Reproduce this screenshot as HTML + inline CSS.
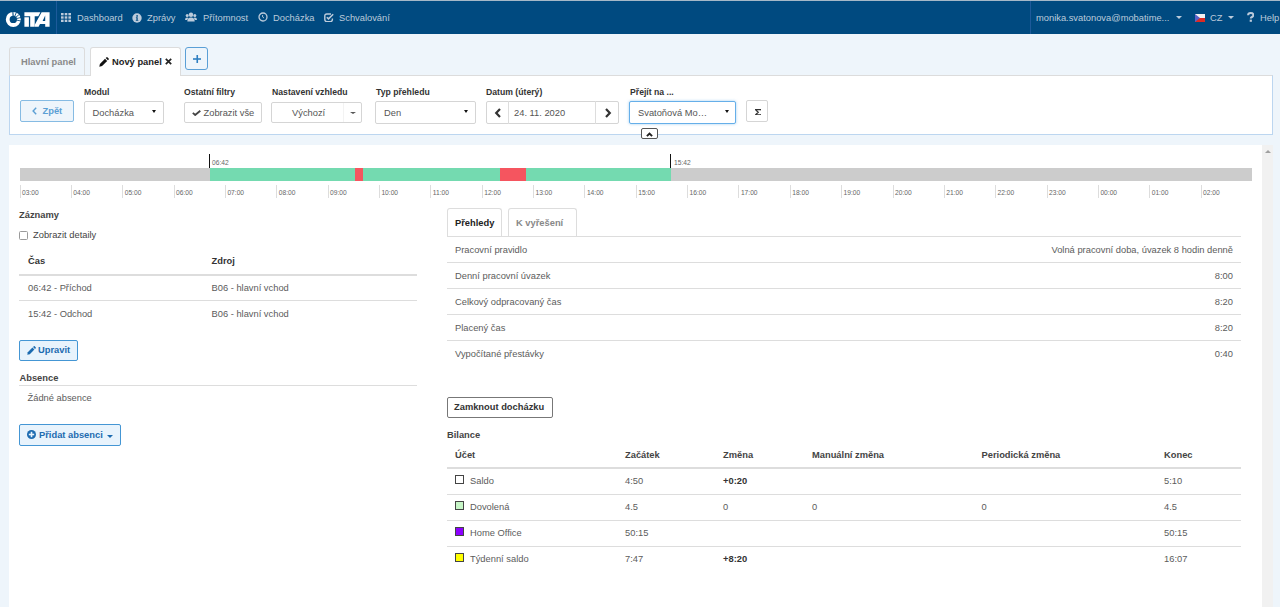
<!DOCTYPE html>
<html><head><meta charset="utf-8">
<style>
*{box-sizing:border-box;margin:0;padding:0}
html,body{width:1280px;height:607px;overflow:hidden}
body{position:relative;background:#eef5fb;font-family:"Liberation Sans",sans-serif;font-size:9.33px;color:#5c5c5c}
.a{position:absolute;white-space:nowrap}
.b{font-weight:bold}
#topline{left:0;top:0;width:1280px;height:1px;background:#a5b8c8}
#nav{left:0;top:1px;width:1280px;height:33px;background:#004a80}
.nv{color:#bccbdb;font-size:9.33px;top:13px;line-height:10px}
.sep{top:1px;height:33px;width:1px;background:#1d5a9a}
.panel{background:#fff}
.lbl{font-weight:bold;color:#333;font-size:8.67px;line-height:10px}
.sel{background:#fff;border:1px solid #d5d5d5;border-radius:2px}
.btn{border-radius:2px}
.caret{width:0;height:0;border-left:2.5px solid transparent;border-right:2.5px solid transparent;border-top:3.5px solid #111}
.tl{font-size:6.67px;color:#666;line-height:7px}
.tick{width:1px;height:13px;background:#ddd;top:185px}
.hl{height:1px;background:#ddd}
.tx{line-height:11px}
</style></head><body>
<div class="a" id="topline"></div>
<div class="a" id="nav"></div>
<!-- logo -->
<svg class="a" style="left:4px;top:10px" width="48" height="20" viewBox="0 0 48 20"><circle cx="9.3" cy="9.399999999999999" r="5.60" fill="none" stroke="#fff" stroke-width="3.80"/><line x1="9.13" y1="6.20" x2="8.88" y2="1.41" stroke="#004a80" stroke-width="1.1"/><line x1="10.60" y1="6.48" x2="12.55" y2="2.09" stroke="#004a80" stroke-width="0.9"/><line x1="11.75" y1="7.34" x2="15.43" y2="4.26" stroke="#004a80" stroke-width="0.85"/><line x1="12.40" y1="8.63" x2="17.06" y2="7.46" stroke="#004a80" stroke-width="0.85"/><line x1="12.43" y1="10.07" x2="17.13" y2="11.06" stroke="#004a80" stroke-width="0.85"/><path d="M20.40 2.20 36.40 2.20 34.30 6.30 30.70 6.30 30.70 16.70 26.20 16.70 26.20 6.30 20.40 6.30Z M20.40 7.30 24.90 7.30 24.90 16.70 20.40 16.70Z" fill="#fff"/><path fill-rule="evenodd" d="M37.60 2.20 45.60 2.20 45.60 16.70 30.80 16.70 30.80 14.80Z M41.20 5.60 41.20 10.90 38.60 10.90Z M36.00 13.90 41.20 13.90 41.20 16.70 34.60 16.70Z" fill="#fff"/></svg>
<div class="a sep" style="left:56px"></div>
<!-- nav items -->
<svg class="a" style="left:61px;top:13px" width="10" height="9" viewBox="0 0 10 10" fill="#bccbdb" preserveAspectRatio="none">
 <rect x="0" y="0" width="2.6" height="2.6"/><rect x="3.7" y="0" width="2.6" height="2.6"/><rect x="7.4" y="0" width="2.6" height="2.6"/>
 <rect x="0" y="3.7" width="2.6" height="2.6"/><rect x="3.7" y="3.7" width="2.6" height="2.6"/><rect x="7.4" y="3.7" width="2.6" height="2.6"/>
 <rect x="0" y="7.4" width="2.6" height="2.6"/><rect x="3.7" y="7.4" width="2.6" height="2.6"/><rect x="7.4" y="7.4" width="2.6" height="2.6"/>
</svg>
<div class="a nv" style="left:77px">Dashboard</div>
<svg class="a" style="left:132px;top:12.5px" width="10" height="10" viewBox="0 0 10 10"><circle cx="5" cy="5" r="4.7" fill="#bccbdb"/><circle cx="5.1" cy="2.9" r="0.85" fill="#004a80"/><path d="M3.9 4.2 H5.7 V7 H6.3 V7.8 H3.8 V7 H4.4 V4.9 H3.9 Z" fill="#004a80"/></svg>
<div class="a nv" style="left:147px">Zprávy</div>
<svg class="a" style="left:185px;top:12px" width="12" height="10" viewBox="0 0 12 10" fill="#bccbdb"><circle cx="6" cy="2.8" r="2.2"/><path d="M2.3 9.5 Q2.3 5.6 6 5.6 Q9.7 5.6 9.7 9.5 Z"/><circle cx="2.2" cy="3.6" r="1.5"/><circle cx="9.8" cy="3.6" r="1.5"/><path d="M0 8 Q0 5.6 2.2 5.6 Q3 5.6 3.4 6 Q2.4 7 2.2 8 Z"/><path d="M12 8 Q12 5.6 9.8 5.6 Q9 5.6 8.6 6 Q9.6 7 9.8 8 Z"/></svg>
<div class="a nv" style="left:203px">Přítomnost</div>
<svg class="a" style="left:257.5px;top:12px" width="10" height="10" viewBox="0 0 10 10"><circle cx="5" cy="5" r="4" fill="none" stroke="#bccbdb" stroke-width="1.3"/><path d="M4.6 3 V5 L6 6" fill="none" stroke="#bccbdb" stroke-width="0.9"/></svg>
<div class="a nv" style="left:273px">Docházka</div>
<svg class="a" style="left:323.5px;top:12.5px" width="10" height="9.5" viewBox="0 0 10 9.5"><path d="M7 1 H2.8 Q0.8 1 0.8 3 V6.6 Q0.8 8.6 2.8 8.6 H6.4 Q8.4 8.6 8.4 6.6 V5.6" fill="none" stroke="#bccbdb" stroke-width="1.4"/><path d="M2.8 4.2 L4.5 5.9 L9.2 1.2" fill="none" stroke="#bccbdb" stroke-width="1.5"/></svg>
<div class="a nv" style="left:339px">Schvalování</div>

<div class="a sep" style="left:1030px"></div>
<div class="a nv" style="left:1036px">monika.svatonova@mobatime...</div>
<div class="a caret" style="left:1176px;top:16px;border-top-color:#bccbdb;border-left-width:3px;border-right-width:3px;border-top-width:3px"></div>
<svg class="a" style="left:1195px;top:14px" width="10" height="8" viewBox="0 0 10 8"><rect width="10" height="4" fill="#f2f2f2"/><rect y="4" width="10" height="4" fill="#dd2a22"/><path d="M0 0 L5 4 L0 8 Z" fill="#5860c8"/></svg>
<div class="a nv" style="left:1210px">CZ</div>
<div class="a caret" style="left:1228px;top:16px;border-top-color:#bccbdb;border-left-width:3px;border-right-width:3px;border-top-width:3px"></div>
<svg class="a" style="left:1246.5px;top:12.3px" width="7.5" height="10" viewBox="0 0 7.5 10"><path d="M1.1 3.2 Q1.1 1 3.7 1 Q6.4 1 6.4 3.1 Q6.4 4.3 5 5 Q3.8 5.6 3.8 6.6" fill="none" stroke="#bccbdb" stroke-width="2"/><rect x="2.7" y="7.6" width="2.2" height="2.2" fill="#bccbdb"/></svg>
<div class="a nv" style="left:1260px">Help</div>

<!-- tabs -->
<div class="a" style="left:9px;top:47px;width:76px;height:29px;border:1px solid #dcdcdc;border-bottom:none;border-radius:3px 3px 0 0;background:#eef5fb"></div>
<div class="a b tx" style="left:21px;top:57px;color:#8a8a8a">Hlavní panel</div>
<div class="a" style="left:90px;top:47px;width:91px;height:29px;border:1px solid #dcdcdc;border-bottom:none;border-radius:3px 3px 0 0;background:#fff;z-index:2"></div>
<svg class="a" style="left:98.5px;top:56.5px;z-index:3" width="10" height="10" viewBox="0 0 10 10"><path d="M0.3 9.7 L0.9 6.9 L6.0 1.8 L8.2 4.0 L3.1 9.1 Z" fill="#111"/><path d="M6.7 1.1 L7.6 0.3 Q8.1 -0.1 8.6 0.4 L9.6 1.4 Q10.1 1.9 9.7 2.4 L8.9 3.3 Z" fill="#111"/></svg>
<div class="a b tx" style="left:112px;top:57px;color:#222;z-index:3">Nový panel</div>
<svg class="a" style="left:165px;top:58px;z-index:3" width="7" height="7" viewBox="0 0 7 7"><path d="M0.8 0.8 L6.2 6.2 M6.2 0.8 L0.8 6.2" stroke="#222" stroke-width="1.7"/></svg>
<div class="a" style="left:185px;top:47px;width:23px;height:23px;border:1px solid #5a9fd6;border-radius:3px;background:#eef5fb"></div>
<svg class="a" style="left:192.5px;top:55px" width="8.5" height="8" viewBox="0 0 8.5 8"><rect x="3.45" y="0" width="1.6" height="8" fill="#2f7fc1"/><rect x="0" y="3.2" width="8.5" height="1.6" fill="#2f7fc1"/></svg>

<!-- filter panel -->
<div class="a" style="left:9px;top:75px;width:1264px;height:60px;background:#fff;border:1px solid #bcd6f0;border-top-color:#dcdcdc"></div>
<div class="a" style="left:91px;top:75px;width:89px;height:2px;background:#fff;z-index:2"></div>

<div class="a btn" style="left:20px;top:100px;width:54px;height:22px;border:1px solid #86bbe3;background:#eef5fb"></div>
<svg class="a" style="left:32px;top:107px" width="5" height="8" viewBox="0 0 5 8"><path d="M4.2 0.8 L1.1 4 L4.2 7.2" fill="none" stroke="#5b9fd4" stroke-width="1.4"/></svg>
<div class="a b tx" style="left:42.5px;top:106px;color:#5b9fd4">Zpět</div>

<div class="a lbl" style="left:84px;top:87px">Modul</div>
<div class="a sel" style="left:84px;top:101px;width:80px;height:23px"></div>
<div class="a tx" style="left:92.5px;top:108px;color:#555">Docházka</div>
<div class="a caret" style="left:152px;top:110px"></div>

<div class="a lbl" style="left:184px;top:87px">Ostatní filtry</div>
<div class="a sel" style="left:184px;top:102px;width:78px;height:21px"></div>
<svg class="a" style="left:191.5px;top:109.5px" width="9" height="6" viewBox="0 0 9 6"><path d="M0.8 2.8 L3.2 5 L8.3 0.7" fill="none" stroke="#444" stroke-width="1.8"/></svg>
<div class="a tx" style="left:203.5px;top:108px;color:#555">Zobrazit vše</div>

<div class="a lbl" style="left:272px;top:87px">Nastavení vzhledu</div>
<div class="a sel" style="left:271px;top:102px;width:91px;height:21px"></div>
<div class="a" style="left:343px;top:103px;width:1px;height:19px;background:#f3f3f3"></div>
<div class="a tx" style="left:292px;top:108px;color:#555">Výchozí</div>
<div class="a caret" style="left:349.5px;top:112px;border-top-color:#555;border-left-width:3px;border-right-width:3px;border-top-width:2.5px"></div>

<div class="a lbl" style="left:376px;top:87px">Typ přehledu</div>
<div class="a sel" style="left:375px;top:101px;width:101px;height:23px"></div>
<div class="a tx" style="left:384px;top:108px;color:#555">Den</div>
<div class="a caret" style="left:464px;top:110px"></div>

<div class="a lbl" style="left:486px;top:87px">Datum (úterý)</div>
<div class="a sel" style="left:486px;top:101px;width:133px;height:23px"></div>
<div class="a" style="left:508px;top:101px;width:1px;height:23px;background:#ddd"></div>
<div class="a" style="left:595px;top:101px;width:1px;height:23px;background:#ddd"></div>
<svg class="a" style="left:494px;top:108px" width="8" height="10" viewBox="0 0 8 10"><path d="M6 1 L2.2 5 L6 9" fill="none" stroke="#333" stroke-width="2.2"/></svg>
<div class="a tx" style="left:514px;top:108px;color:#555">24. 11. 2020</div>
<svg class="a" style="left:603.5px;top:108px" width="8" height="10" viewBox="0 0 8 10"><path d="M2 1 L5.8 5 L2 9" fill="none" stroke="#333" stroke-width="2.2"/></svg>

<div class="a lbl" style="left:630px;top:87px">Přejít na ...</div>
<div class="a" style="left:629px;top:101px;width:107px;height:23px;border:1px solid #66afe9;border-radius:2px;box-shadow:0 0 3px rgba(102,175,233,.6);background:#fff"></div>
<div class="a tx" style="left:638px;top:108px;color:#555">Svatoňová Mo…</div>
<div class="a caret" style="left:725px;top:110px"></div>

<div class="a sel" style="left:746px;top:100px;width:22px;height:22px"></div>
<svg class="a" style="left:754.5px;top:108.5px" width="6.5" height="6.5" viewBox="0 0 6.5 6.5"><path d="M6.2 1.6 V0.6 H0.5 L3.2 3.25 L0.5 5.9 H6.2 V4.9" fill="none" stroke="#333" stroke-width="1.3"/></svg>

<div class="a" style="left:641px;top:128px;width:17px;height:11px;border:1px solid #555;border-radius:2px;background:#fff;z-index:3"></div>
<svg class="a" style="left:646px;top:131.5px;z-index:4" width="7" height="5" viewBox="0 0 7 5"><path d="M0.9 4.2 L3.5 1.5 L6.1 4.2" fill="none" stroke="#222" stroke-width="1.9"/></svg>

<!-- main panel -->
<div class="a panel" style="left:9px;top:145px;width:1253px;height:470px"></div>
<div class="a" style="left:1262px;top:145px;width:11px;height:470px;background:#f1f1f1"></div>
<div class="a" style="left:1265px;top:149.5px;width:0;height:0;border-left:3px solid transparent;border-right:3px solid transparent;border-bottom:3.5px solid #a0a0a0"></div>

<div class="a" style="left:19.5px;top:168px;width:1232.5px;height:13px;background:#cccccc"></div>
<div class="a" style="left:209.5px;top:168px;width:461.5px;height:13px;background:#74dab0"></div>
<div class="a" style="left:355px;top:168px;width:8px;height:13px;background:#f5555f"></div>
<div class="a" style="left:500px;top:168px;width:26px;height:13px;background:#f5555f"></div>
<div class="a" style="left:209px;top:154px;width:1.2px;height:14px;background:#111"></div>
<div class="a tl" style="left:212px;top:159px">06:42</div>
<div class="a" style="left:670px;top:154px;width:1.2px;height:14px;background:#111"></div>
<div class="a tl" style="left:674px;top:159px">15:42</div>
<div class="a tick" style="left:19.5px"></div>
<div class="a tl" style="left:22.0px;top:189px">03:00</div>
<div class="a tick" style="left:70.8px"></div>
<div class="a tl" style="left:73.3px;top:189px">04:00</div>
<div class="a tick" style="left:122.2px"></div>
<div class="a tl" style="left:124.7px;top:189px">05:00</div>
<div class="a tick" style="left:173.6px"></div>
<div class="a tl" style="left:176.1px;top:189px">06:00</div>
<div class="a tick" style="left:224.9px"></div>
<div class="a tl" style="left:227.4px;top:189px">07:00</div>
<div class="a tick" style="left:276.2px"></div>
<div class="a tl" style="left:278.8px;top:189px">08:00</div>
<div class="a tick" style="left:327.6px"></div>
<div class="a tl" style="left:330.1px;top:189px">09:00</div>
<div class="a tick" style="left:378.9px"></div>
<div class="a tl" style="left:381.4px;top:189px">10:00</div>
<div class="a tick" style="left:430.3px"></div>
<div class="a tl" style="left:432.8px;top:189px">11:00</div>
<div class="a tick" style="left:481.7px"></div>
<div class="a tl" style="left:484.2px;top:189px">12:00</div>
<div class="a tick" style="left:533.0px"></div>
<div class="a tl" style="left:535.5px;top:189px">13:00</div>
<div class="a tick" style="left:584.4px"></div>
<div class="a tl" style="left:586.9px;top:189px">14:00</div>
<div class="a tick" style="left:635.7px"></div>
<div class="a tl" style="left:638.2px;top:189px">15:00</div>
<div class="a tick" style="left:687.1px"></div>
<div class="a tl" style="left:689.6px;top:189px">16:00</div>
<div class="a tick" style="left:738.4px"></div>
<div class="a tl" style="left:740.9px;top:189px">17:00</div>
<div class="a tick" style="left:789.8px"></div>
<div class="a tl" style="left:792.2px;top:189px">18:00</div>
<div class="a tick" style="left:841.1px"></div>
<div class="a tl" style="left:843.6px;top:189px">19:00</div>
<div class="a tick" style="left:892.5px"></div>
<div class="a tl" style="left:895.0px;top:189px">20:00</div>
<div class="a tick" style="left:943.8px"></div>
<div class="a tl" style="left:946.3px;top:189px">21:00</div>
<div class="a tick" style="left:995.1px"></div>
<div class="a tl" style="left:997.6px;top:189px">22:00</div>
<div class="a tick" style="left:1046.5px"></div>
<div class="a tl" style="left:1049.0px;top:189px">23:00</div>
<div class="a tick" style="left:1097.9px"></div>
<div class="a tl" style="left:1100.4px;top:189px">00:00</div>
<div class="a tick" style="left:1149.2px"></div>
<div class="a tl" style="left:1151.7px;top:189px">01:00</div>
<div class="a tick" style="left:1200.5px"></div>
<div class="a tl" style="left:1203.0px;top:189px">02:00</div>


<!-- left section -->
<div class="a b tx" style="left:19px;top:210px;color:#444">Záznamy</div>
<div class="a" style="left:19px;top:231px;width:9px;height:9px;border:1px solid #9a9a9a;border-radius:1.5px;background:#fff"></div>
<div class="a tx" style="left:33px;top:230px;color:#444">Zobrazit detaily</div>
<div class="a b tx" style="left:28px;top:256px;color:#333">Čas</div>
<div class="a b tx" style="left:211.5px;top:256px;color:#333">Zdroj</div>
<div class="a hl" style="left:19px;top:274px;width:398px;height:1.5px;background:#ddd"></div>
<div class="a tx" style="left:28px;top:283px">06:42 - Příchod</div>
<div class="a tx" style="left:211.5px;top:283px">B06 - hlavní vchod</div>
<div class="a hl" style="left:19px;top:300px;width:398px"></div>
<div class="a tx" style="left:28px;top:309px">15:42 - Odchod</div>
<div class="a tx" style="left:211.5px;top:309px">B06 - hlavní vchod</div>

<div class="a btn" style="left:19px;top:340px;width:59px;height:21px;border:1px solid #4496d4;background:#e8f3fc"></div>
<svg class="a" style="left:26.5px;top:346px" width="9" height="9" viewBox="0 0 10 10"><path d="M0.3 9.7 L0.9 6.9 L6.0 1.8 L8.2 4.0 L3.1 9.1 Z" fill="#1c6bb0"/><path d="M6.7 1.1 L7.6 0.3 Q8.1 -0.1 8.6 0.4 L9.6 1.4 Q10.1 1.9 9.7 2.4 L8.9 3.3 Z" fill="#1c6bb0"/></svg>
<div class="a b tx" style="left:38px;top:345px;color:#1c6bb0">Upravit</div>

<div class="a b tx" style="left:19.5px;top:373px;color:#444">Absence</div>
<div class="a hl" style="left:19px;top:385px;width:398px"></div>
<div class="a tx" style="left:27.5px;top:393px">Žádné absence</div>

<div class="a btn" style="left:19px;top:424px;width:102px;height:22px;border:1px solid #4496d4;background:#e8f3fc"></div>
<svg class="a" style="left:27px;top:430px" width="9" height="9" viewBox="0 0 10 10"><circle cx="5" cy="5" r="5" fill="#1c6bb0"/><rect x="4.1" y="2" width="1.8" height="6" fill="#e8f3fc"/><rect x="2" y="4.1" width="6" height="1.8" fill="#e8f3fc"/></svg>
<div class="a b tx" style="left:39px;top:430px;color:#1c6bb0">Přidat absenci</div>
<div class="a caret" style="left:107px;top:435px;border-top-color:#1c6bb0;border-left-width:3px;border-right-width:3px;border-top-width:3px"></div>

<!-- right section -->
<div class="a" style="left:447px;top:208px;width:55px;height:28px;border:1px solid #ddd;border-bottom:none;border-radius:3px 3px 0 0;background:#fff"></div>
<div class="a b tx" style="left:455px;top:218px;color:#222;z-index:3">Přehledy</div>
<div class="a" style="left:507.5px;top:208px;width:69px;height:28px;border:1px solid #ddd;border-bottom:none;border-radius:3px 3px 0 0;background:#fff"></div>
<div class="a b tx" style="left:516px;top:218px;color:#888">K vyřešení</div>
<div class="a hl" style="left:447px;top:235.5px;width:794px;height:1.5px"></div>
<div class="a tx" style="left:455px;top:245px">Pracovní pravidlo</div>
<div class="a tx" style="right:47px;top:245px">Volná pracovní doba, úvazek 8 hodin denně</div>
<div class="a hl" style="left:447px;top:262px;width:794px"></div>
<div class="a tx" style="left:455px;top:271px">Denní pracovní úvazek</div>
<div class="a tx" style="right:47px;top:271px">8:00</div>
<div class="a hl" style="left:447px;top:288px;width:794px"></div>
<div class="a tx" style="left:455px;top:297px">Celkový odpracovaný čas</div>
<div class="a tx" style="right:47px;top:297px">8:20</div>
<div class="a hl" style="left:447px;top:314px;width:794px"></div>
<div class="a tx" style="left:455px;top:323px">Placený čas</div>
<div class="a tx" style="right:47px;top:323px">8:20</div>
<div class="a hl" style="left:447px;top:340px;width:794px"></div>
<div class="a tx" style="left:455px;top:349px">Vypočítané přestávky</div>
<div class="a tx" style="right:47px;top:349px">0:40</div>

<div class="a btn" style="left:447px;top:397px;width:106px;height:21px;border:1px solid #777;background:#fff"></div>
<div class="a b tx" style="left:454px;top:402px;color:#333">Zamknout docházku</div>

<div class="a b tx" style="left:447px;top:430px;color:#444">Bilance</div>
<div class="a b tx" style="left:455px;top:450px;color:#444">Účet</div>
<div class="a b tx" style="left:625px;top:450px;color:#444">Začátek</div>
<div class="a b tx" style="left:723px;top:450px;color:#444">Změna</div>
<div class="a b tx" style="left:812px;top:450px;color:#444">Manuální změna</div>
<div class="a b tx" style="left:981.5px;top:450px;color:#444">Periodická změna</div>
<div class="a b tx" style="left:1164px;top:450px;color:#444">Konec</div>
<div class="a hl" style="left:447px;top:467px;width:794px;height:1.5px"></div>

<div class="a" style="left:455px;top:475px;width:9px;height:9px;border:1px solid #444;background:#fff"></div>
<div class="a tx" style="left:470px;top:476px">Saldo</div>
<div class="a tx" style="left:625px;top:476px">4:50</div>
<div class="a b tx" style="left:723px;top:476px;color:#333">+0:20</div>
<div class="a tx" style="left:1164px;top:476px">5:10</div>
<div class="a hl" style="left:447px;top:494px;width:794px"></div>

<div class="a" style="left:455px;top:501px;width:9px;height:9px;border:1px solid #444;background:#c6f5c6"></div>
<div class="a tx" style="left:470px;top:502px">Dovolená</div>
<div class="a tx" style="left:625px;top:502px">4.5</div>
<div class="a tx" style="left:723px;top:502px">0</div>
<div class="a tx" style="left:812px;top:502px">0</div>
<div class="a tx" style="left:981.5px;top:502px">0</div>
<div class="a tx" style="left:1164px;top:502px">4.5</div>
<div class="a hl" style="left:447px;top:520px;width:794px"></div>

<div class="a" style="left:455px;top:527px;width:9px;height:9px;border:1px solid #444;background:#8c00ff"></div>
<div class="a tx" style="left:470px;top:528px">Home Office</div>
<div class="a tx" style="left:625px;top:528px">50:15</div>
<div class="a tx" style="left:1164px;top:528px">50:15</div>
<div class="a hl" style="left:447px;top:546px;width:794px"></div>

<div class="a" style="left:455px;top:553px;width:9px;height:9px;border:1px solid #444;background:#ffff00"></div>
<div class="a tx" style="left:470px;top:554px">Týdenní saldo</div>
<div class="a tx" style="left:625px;top:554px">7:47</div>
<div class="a b tx" style="left:723px;top:554px;color:#333">+8:20</div>
<div class="a tx" style="left:1164px;top:554px">16:07</div>
</body></html>
